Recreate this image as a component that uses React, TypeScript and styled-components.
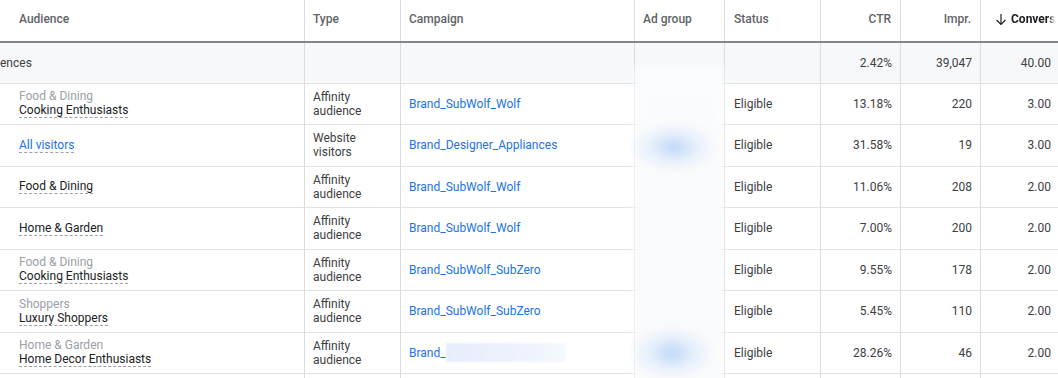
import React from 'react';
import styled, { createGlobalStyle } from 'styled-components';

const GlobalStyle = createGlobalStyle`
  body {
    margin: 0;
    background: #ffffff;
    font-family: Roboto, "Liberation Sans", Arial, sans-serif;
    overflow: hidden;
  }
`;

type AudienceRow = {
  category?: string;
  name: string;
  isLink?: boolean;
  type: [string, string];
  campaign: string;
  hiddenCampaign?: boolean;
  status: string;
  ctr: string;
  impr: string;
  conv: string;
};

const rows: AudienceRow[] = [
  { category: 'Food & Dining', name: 'Cooking Enthusiasts', type: ['Affinity', 'audience'], campaign: 'Brand_SubWolf_Wolf', status: 'Eligible', ctr: '13.18%', impr: '220', conv: '3.00' },
  { name: 'All visitors', isLink: true, type: ['Website', 'visitors'], campaign: 'Brand_Designer_Appliances', status: 'Eligible', ctr: '31.58%', impr: '19', conv: '3.00' },
  { name: 'Food & Dining', type: ['Affinity', 'audience'], campaign: 'Brand_SubWolf_Wolf', status: 'Eligible', ctr: '11.06%', impr: '208', conv: '2.00' },
  { name: 'Home & Garden', type: ['Affinity', 'audience'], campaign: 'Brand_SubWolf_Wolf', status: 'Eligible', ctr: '7.00%', impr: '200', conv: '2.00' },
  { category: 'Food & Dining', name: 'Cooking Enthusiasts', type: ['Affinity', 'audience'], campaign: 'Brand_SubWolf_SubZero', status: 'Eligible', ctr: '9.55%', impr: '178', conv: '2.00' },
  { category: 'Shoppers', name: 'Luxury Shoppers', type: ['Affinity', 'audience'], campaign: 'Brand_SubWolf_SubZero', status: 'Eligible', ctr: '5.45%', impr: '110', conv: '2.00' },
  { category: 'Home & Garden', name: 'Home Decor Enthusiasts', type: ['Affinity', 'audience'], campaign: 'Brand_', hiddenCampaign: true, status: 'Eligible', ctr: '28.26%', impr: '46', conv: '2.00' },
];

const SortArrow = () => (
  <svg width="12" height="13" viewBox="0 0 12 13" fill="none">
    <path d="M6 1v10.5M1.5 7L6 11.5 10.5 7" stroke="#202124" strokeWidth="1.2" />
  </svg>
);

const App = (): JSX.Element => {
  return (
    <>
      <GlobalStyle />
      <Table>
        <HeaderRow>
          <HeadCell $pad="19px">Audience</HeadCell>
          <HeadCell>Type</HeadCell>
          <HeadCell>Campaign</HeadCell>
          <HeadCell>Ad group</HeadCell>
          <HeadCell $pad="9px">Status</HeadCell>
          <HeadCell $right>CTR</HeadCell>
          <HeadCell $right>Impr.</HeadCell>
          <SortedHead>
            <SortArrow />
            <SortLabel>Conversions</SortLabel>
          </SortedHead>
        </HeaderRow>

        <Row $total>
          <Cell $pad="0px">ences</Cell>
          <Cell />
          <Cell />
          <Cell />
          <Cell />
          <Cell $right>2.42%</Cell>
          <Cell $right>39,047</Cell>
          <Cell $right $last>40.00</Cell>
        </Row>

        {rows.map((row, i) => (
          <Row key={i}>
            <Cell $pad="19px">
              <Stack>
                {row.category && <Category>{row.category}</Category>}
                <AudienceName $link={row.isLink}>{row.name}</AudienceName>
              </Stack>
            </Cell>
            <Cell>
              <Stack>
                <span>{row.type[0]}</span>
                <span>{row.type[1]}</span>
              </Stack>
            </Cell>
            <Cell>
              <CampaignLink>{row.campaign}</CampaignLink>
              {row.hiddenCampaign && <Redacted />}
            </Cell>
            <Cell />
            <Cell $pad="9px">{row.status}</Cell>
            <Cell $right>{row.ctr}</Cell>
            <Cell $right>{row.impr}</Cell>
            <Cell $right $last>{row.conv}</Cell>
          </Row>
        ))}

        <Row>
          <Cell />
          <Cell />
          <Cell />
          <Cell />
          <Cell />
          <Cell />
          <Cell />
          <Cell $last />
        </Row>

        <AdGroupMask />
      </Table>
    </>
  );
};

const Table = styled.div`
  position: relative;
  width: 1058px;
  height: 378px;
  overflow: hidden;
  font-size: 12px;
  color: #3c4043;
`;

const columns = '305px 96px 234px 90px 96px 80px 80px 77px';

const HeaderRow = styled.div`
  display: grid;
  grid-template-columns: ${columns};
  height: 43px;
  box-sizing: border-box;
  border-bottom: 2px solid #80868b;
`;

const HeadCell = styled.div<{ $pad?: string; $right?: boolean }>`
  display: flex;
  align-items: center;
  justify-content: ${(p) => (p.$right ? 'flex-end' : 'flex-start')};
  padding: 0 ${(p) => (p.$right ? '9px' : '8px')} 3px ${(p) => p.$pad || '8px'};
  border-right: 1px solid #dadce0;
  color: #5f6368;
  font-size: 12px;
  font-weight: 500;
  white-space: nowrap;
`;

const SortedHead = styled.div`
  display: flex;
  align-items: center;
  gap: 4px;
  padding: 0 0 3px 14px;
  overflow: hidden;
  white-space: nowrap;
  color: #202124;
  font-size: 12px;
  font-weight: 700;

  svg {
    flex-shrink: 0;
  }
`;

const SortLabel = styled.span`
  flex-shrink: 0;
  -webkit-mask-image: linear-gradient(90deg, #000 38px, transparent 44px);
  mask-image: linear-gradient(90deg, #000 38px, transparent 44px);
`;

const Row = styled.div<{ $total?: boolean }>`
  display: grid;
  grid-template-columns: ${columns};
  height: ${(p) => (p.$total ? '40.5px' : '41.5px')};
  box-sizing: border-box;
  border-bottom: 1px solid #e0e2e6;
  background: ${(p) => (p.$total ? '#f7f8fa' : '#ffffff')};
`;

const Cell = styled.div<{ $pad?: string; $right?: boolean; $last?: boolean }>`
  display: flex;
  align-items: center;
  justify-content: ${(p) => (p.$right ? 'flex-end' : 'flex-start')};
  padding: 0 ${(p) => (p.$last ? '7px' : '8px')} 0 ${(p) => p.$pad || '8px'};
  border-right: ${(p) => (p.$last ? 'none' : '1px solid #dadce0')};
  white-space: nowrap;
  overflow: hidden;
`;

const Stack = styled.div`
  display: flex;
  flex-direction: column;
  line-height: 14px;
`;

const Category = styled.span`
  color: #9aa0a6;
`;

const AudienceName = styled.span<{ $link?: boolean }>`
  align-self: flex-start;
  color: ${(p) => (p.$link ? '#1a73e8' : '#202124')};
  border-bottom: 1px dashed #9aa0a6;
  line-height: 14px;
`;

const CampaignLink = styled.span`
  color: #1a73e8;
`;

const Redacted = styled.span`
  display: inline-block;
  width: 120px;
  height: 19px;
  background: linear-gradient(90deg, #e6eefc, #eef3fd 70%, #f6f9fe);
  filter: blur(1px);
`;

const AdGroupMask = styled.div`
  position: absolute;
  left: 634px;
  top: 67px;
  width: 89px;
  height: 320px;
  background:
    radial-gradient(ellipse 44px 26px at 40px 80px, rgba(175, 205, 247, 0.8), rgba(205, 224, 250, 0.4) 55%, rgba(255, 255, 255, 0) 100%),
    radial-gradient(ellipse 44px 28px at 38px 286px, rgba(175, 205, 247, 0.8), rgba(205, 224, 250, 0.4) 55%, rgba(255, 255, 255, 0) 100%),
    linear-gradient(180deg, #fbfcfd, #f9fafb 50%, #fafbfc);
  filter: blur(3px);
`;

export default App;
